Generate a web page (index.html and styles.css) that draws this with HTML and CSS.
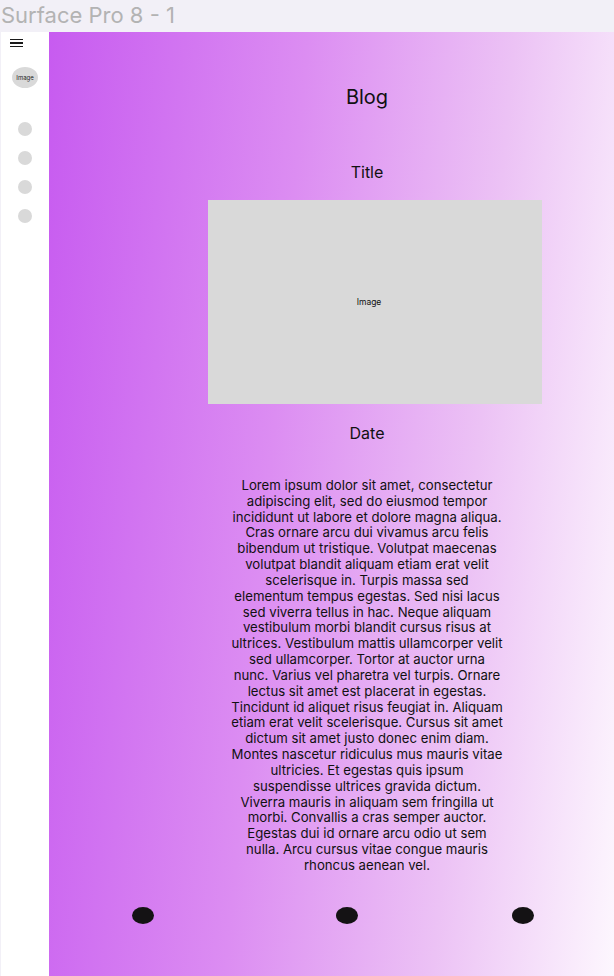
FILE: index.html
```html
<!DOCTYPE html>
<html>
<head>
<meta charset="utf-8">
<link rel="stylesheet" href="styles.css">
</head>
<body>
<div class="titlebar">Surface Pro 8 - 1</div>
<div class="frame">
  <aside class="sidebar">
    <div class="hamburger"><span></span><span></span><span></span></div>
    <div class="avatar">Image</div>
    <div class="navdots">
      <span class="navdot"></span>
      <span class="navdot"></span>
      <span class="navdot"></span>
      <span class="navdot"></span>
    </div>
  </aside>
  <main class="main">
    <div class="column">
      <h1 class="heading">Blog</h1>
      <h2 class="post-title">Title</h2>
      <div class="post-image">Image</div>
      <div class="post-date">Date</div>
      <p class="post-body">Lorem ipsum dolor sit amet, consectetur<br>
adipiscing elit, sed do eiusmod tempor<br>
incididunt ut labore et dolore magna aliqua.<br>
Cras ornare arcu dui vivamus arcu felis<br>
bibendum ut tristique. Volutpat maecenas<br>
volutpat blandit aliquam etiam erat velit<br>
scelerisque in. Turpis massa sed<br>
elementum tempus egestas. Sed nisi lacus<br>
sed viverra tellus in hac. Neque aliquam<br>
vestibulum morbi blandit cursus risus at<br>
ultrices. Vestibulum mattis ullamcorper velit<br>
sed ullamcorper. Tortor at auctor urna<br>
nunc. Varius vel pharetra vel turpis. Ornare<br>
lectus sit amet est placerat in egestas.<br>
Tincidunt id aliquet risus feugiat in. Aliquam<br>
etiam erat velit scelerisque. Cursus sit amet<br>
dictum sit amet justo donec enim diam.<br>
Montes nascetur ridiculus mus mauris vitae<br>
ultricies. Et egestas quis ipsum<br>
suspendisse ultrices gravida dictum.<br>
Viverra mauris in aliquam sem fringilla ut<br>
morbi. Convallis a cras semper auctor.<br>
Egestas dui id ornare arcu odio ut sem<br>
nulla. Arcu cursus vitae congue mauris<br>
rhoncus aenean vel.</p>
    </div>
    <div class="pager">
      <span class="pager-dot"></span>
      <span class="pager-dot pager-dot--mid"></span>
      <span class="pager-dot pager-dot--last"></span>
    </div>
  </main>
</div>
</body>
</html>
```
FILE: styles.css
```css
* { box-sizing: border-box; }
html, body { margin: 0; padding: 0; }
body {
  background: #f2f0f7;
  font-family: Inter, "Noto Sans", sans-serif;
  width: 614px;
  height: 976px;
  overflow: hidden;
}
.titlebar {
  height: 32px;
  padding-left: 1px;
  font-size: 22px;
  line-height: 31px;
  color: #b3b3b3;
  font-weight: 400;
}
.frame {
  display: flex;
  height: 944px;
  margin-left: 1px;
}
.sidebar {
  width: 48px;
  background: #ffffff;
  display: flex;
  flex-direction: column;
  align-items: flex-start;
}
.hamburger {
  margin: 7px 0 0 9px;
  width: 13px;
  display: flex;
  flex-direction: column;
  gap: 2px;
}
.hamburger span {
  display: block;
  height: 1.3px;
  background: #1a1a1a;
}
.avatar {
  margin: 20px 0 0 11px;
  width: 26px;
  height: 21px;
  border-radius: 50%;
  background: #d9d9d9;
  color: #222;
  font-size: 6px;
  display: flex;
  align-items: center;
  justify-content: center;
}
.navdots {
  margin: 34px 0 0 17px;
  display: flex;
  flex-direction: column;
  gap: 15px;
}
.navdot {
  width: 14px;
  height: 14px;
  border-radius: 50%;
  background: #d9d9d9;
}
.main {
  flex: 1;
  background: linear-gradient(95deg, #c75bf0 0%, #dc8df2 40%, #ecc2f5 72%, #fdf7fe 100%);
  padding-left: 151px;
  padding-top: 53px;
  display: flex;
  flex-direction: column;
}
.column {
  width: 334px;
  display: flex;
  flex-direction: column;
  align-items: center;
  color: #111;
}
.heading {
  margin: 0;
  font-size: 20px;
  line-height: 24px;
  font-weight: 400;
}
.post-title {
  margin: 53px 0 0;
  font-size: 16px;
  line-height: 20px;
  font-weight: 400;
}
.post-image {
  align-self: flex-start;
  margin: 18px 0 0 8px;
  width: 334px;
  height: 204px;
  padding-right: 12px;
  background: #d9d9d9;
  font-size: 8.5px;
  display: flex;
  align-items: center;
  justify-content: center;
}
.post-date {
  margin-top: 19px;
  font-size: 16px;
  line-height: 20px;
}
.post-body {
  margin: 35px 0 0;
  width: 320px;
  font-size: 13.2px;
  line-height: 15.83px;
  text-align: center;
}
.pager {
  margin-top: 33px;
  display: flex;
  padding-left: 83px;
  margin-left: -151px;
}
.pager-dot {
  width: 22px;
  height: 17px;
  border-radius: 50%;
  background: #141214;
}
.pager-dot--mid { margin-left: 182px; }
.pager-dot--last { margin-left: 154px; }
```
